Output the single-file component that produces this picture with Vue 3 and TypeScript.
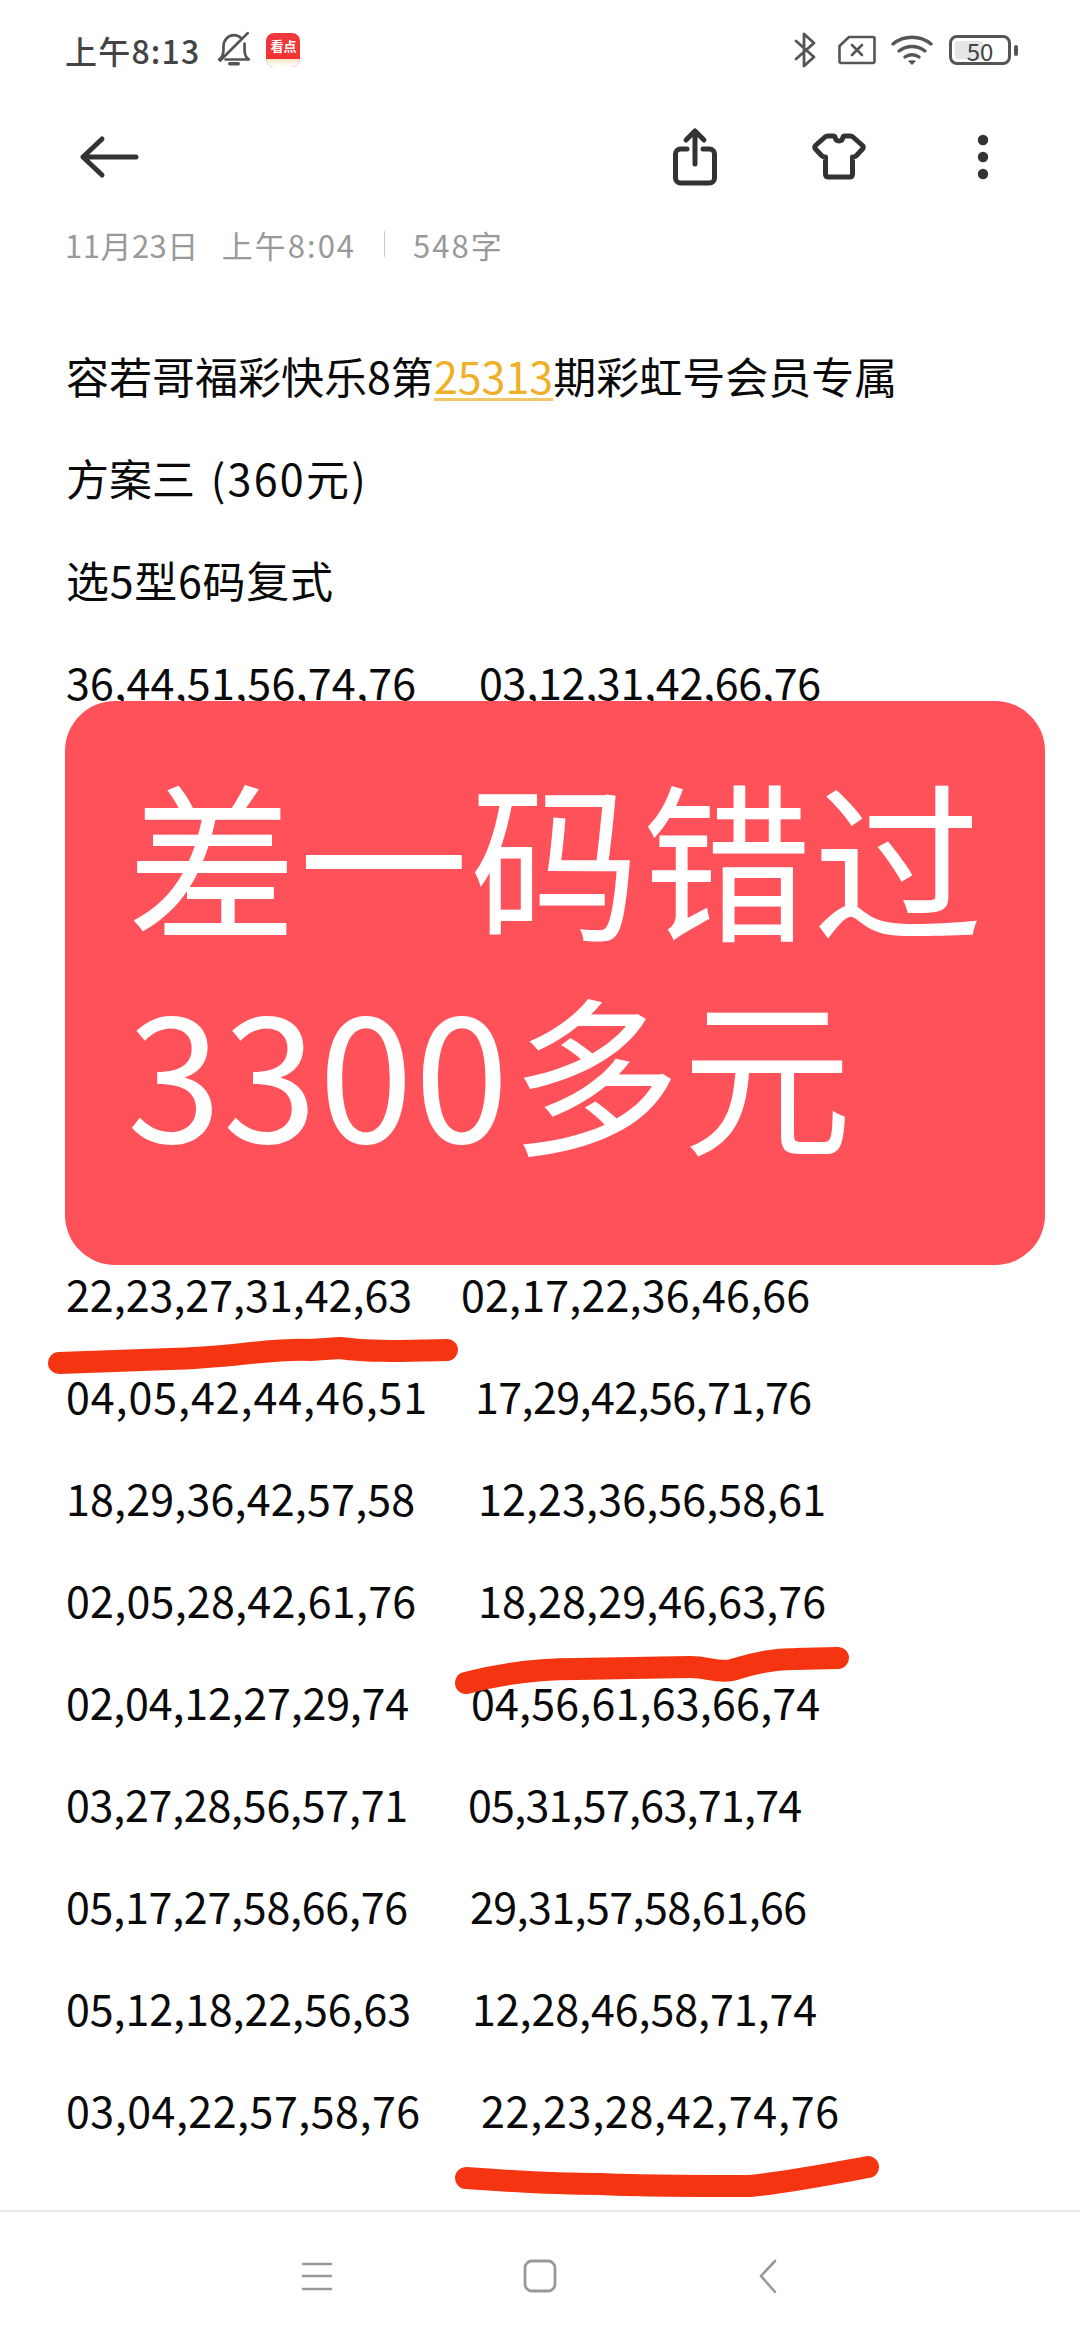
<script setup lang="ts">
interface NumberRow {
  left: string;
  leftW: number;
  right: string;
  rightW: number;
  rightX: number;
}

// 第二列的起始位置不整齐，原文是用空格隔开的
const topRow: NumberRow = { left: "36,44,51,56,74,76", leftW: 350, right: "03,12,31,42,66,76", rightW: 342, rightX: 479 };

const rows: NumberRow[] = [
  { left: "22,23,27,31,42,63", leftW: 346, right: "02,17,22,36,46,66", rightW: 349, rightX: 461 },
  { left: "04,05,42,44,46,51", leftW: 361, right: "17,29,42,56,71,76", rightW: 337, rightX: 475 },
  { left: "18,29,36,42,57,58", leftW: 349, right: "12,23,36,56,58,61", rightW: 348, rightX: 478 },
  { left: "02,05,28,42,61,76", leftW: 350, right: "18,28,29,46,63,76", rightW: 348, rightX: 478 },
  { left: "02,04,12,27,29,74", leftW: 343, right: "04,56,61,63,66,74", rightW: 349, rightX: 471 },
  { left: "03,27,28,56,57,71", leftW: 342, right: "05,31,57,63,71,74", rightW: 334, rightX: 468 },
  { left: "05,17,27,58,66,76", leftW: 342, right: "29,31,57,58,61,66", rightW: 337, rightX: 470 },
  { left: "05,12,18,22,56,63", leftW: 345, right: "12,28,46,58,71,74", rightW: 345, rightX: 472 },
  { left: "03,04,22,57,58,76", leftW: 354, right: "22,23,28,42,74,76", rightW: 358, rightX: 481 },
];

// 这里的数字宽度不一样，按每列的实际宽度调字距
const spacing = (width: number) => `${((width - 346) / 16).toFixed(2)}px`;
const leftStyle = (row: NumberRow) => ({ width: `${row.rightX - 66}px`, letterSpacing: spacing(row.leftW) });
const rightStyle = (row: NumberRow) => ({ letterSpacing: spacing(row.rightW) });
</script>

<template>
  <div class="page">
    <div class="status">
      <span class="time">上午8:13</span>
      <svg class="bell" width="36" height="38" viewBox="0 0 34 36" fill="none" stroke="#555" stroke-width="2.6" stroke-linecap="round" stroke-linejoin="round">
        <path d="M3 27c3-2 4-5 4-9v-3C7 9 11 4 17 4c3 0 5 1 7 3" />
        <path d="M27 12v6c0 4 1 7 4 9H9" />
        <path d="M13 31h8" stroke-width="3.4" />
        <path d="M30 2 4 28" />
      </svg>
      <div class="app-icon">
        <span class="app-name">看点</span>
        <span class="app-foot"></span>
      </div>
      <div class="status-right">
        <svg width="24" height="36" viewBox="0 0 24 36" fill="none" stroke="#555" stroke-width="2.8" stroke-linecap="round" stroke-linejoin="round">
          <path d="M3 9 21 25 11 34V2l10 9L3 27" />
        </svg>
        <svg class="sim" width="38" height="30" viewBox="0 0 38 30" fill="none" stroke="#555" stroke-width="2.6" stroke-linecap="round" stroke-linejoin="round">
          <path d="M1.5 11 11 2h24a1.5 1.5 0 0 1 1.5 1.5v23A1.5 1.5 0 0 1 35 28H3a1.5 1.5 0 0 1-1.5-1.5z" />
          <path d="M14 10l10 10M24 10 14 20" />
        </svg>
        <svg class="wifi" width="42" height="32" viewBox="0 0 42 32" fill="none" stroke="#555" stroke-width="3.4" stroke-linecap="round">
          <path d="M2 10c11-9 27-9 38 0" />
          <path d="M8 17c8-6 18-6 26 0" />
          <path d="M14 23c4-3 10-3 14 0" />
          <path d="M21 31l-4-4c2-1 6-1 8 0z" fill="#555" stroke="none" />
        </svg>
        <div class="battery">
          <span class="battery-fill"></span>
          <span class="battery-num">50</span>
        </div>
        <span class="battery-nub"></span>
      </div>
    </div>

    <div class="toolbar">
      <svg width="70" height="60" viewBox="0 0 70 60" fill="none" stroke="#333" stroke-width="5" stroke-linecap="round" stroke-linejoin="round">
        <path d="M60 30H7M26 12 7 30l19 18" />
      </svg>
      <svg class="share" width="60" height="60" viewBox="0 0 60 60" fill="none" stroke="#333" stroke-width="5" stroke-linecap="round" stroke-linejoin="round">
        <path d="M22 22h-6.500a5 5 0 0 0-5 5v24a5 5 0 0 0 5 5h29a5 5 0 0 0 5-5V27a5 5 0 0 0-5-5H38" />
        <path d="M30 37V5M21 13l9-9 9 9" />
      </svg>
      <svg width="60" height="60" viewBox="0 0 60 60" fill="none" stroke="#333" stroke-width="5" stroke-linecap="round" stroke-linejoin="round">
        <path d="M24 9c1 0 2 .5 2.200 2 1 4 6.600 4 7.600 0 .2-1.500 1.200-2 2.200-2h5c1 0 2 0 3 1l9.500 8.500c1 1 1 2.500 0 3.500l-6.500 7c-1 1-2 1-3.500 1v17c0 2-1 3-3 3H19.500c-2 0-3-1-3-3V30c-1.500 0-2.500 0-3.500-1l-6.500-7c-1-1-1-2.500 0-3.500L16 10c1-1 2-1 3-1z" />
      </svg>
      <svg width="60" height="60" viewBox="0 0 60 60" fill="#333">
        <circle cx="30" cy="13" r="5.200" />
        <circle cx="30" cy="30" r="5.200" />
        <circle cx="30" cy="47" r="5.200" />
      </svg>
    </div>

    <div class="meta">
      <span class="meta-date">11月23日</span>
      <span class="meta-time">上午8:04</span>
      <span class="meta-divider"></span>
      <span class="meta-count">548字</span>
    </div>

    <div class="note">
      <p class="line">容若哥福彩快乐8第<span class="issue">25313</span>期彩虹号会员专属</p>
      <p class="line plan">方案三 <span class="plan-price">(360元)</span></p>
      <p class="line kind">选5型6码复式</p>
      <p class="line">
        <span class="col" :style="leftStyle(topRow)">{{ topRow.left }}</span><span :style="rightStyle(topRow)">{{ topRow.right }}</span>
      </p>
      <div class="covered"></div>
      <p v-for="row in rows" :key="row.left" class="line">
        <span class="col" :style="leftStyle(row)">{{ row.left }}</span><span :style="rightStyle(row)">{{ row.right }}</span>
      </p>

      <div class="banner">
        <div>差一码错过</div>
        <div>3300多元</div>
      </div>
    </div>

    <div class="nav">
      <svg width="32" height="32" viewBox="0 0 32 32" fill="none" stroke="#999" stroke-width="2.600" stroke-linecap="round">
        <path d="M2 4h28M2 16h28M2 29h28" />
      </svg>
      <svg width="34" height="34" viewBox="0 0 34 34" fill="none" stroke="#999" stroke-width="2.800">
        <rect x="2" y="2" width="30" height="30" rx="7" />
      </svg>
      <svg width="20" height="34" viewBox="0 0 20 34" fill="none" stroke="#999" stroke-width="2.600" stroke-linecap="round" stroke-linejoin="round">
        <path d="M17 2 3 17l14 16" />
      </svg>
    </div>

    <svg class="marks" width="1080" height="2340" viewBox="0 0 1080 2340" fill="none" stroke="#F53511" stroke-width="22" stroke-linecap="round" stroke-linejoin="round">
      <path d="M59 1363 170 1359C230 1358 270 1348 310 1350L340 1348C370 1352 400 1351 447 1350" />
      <path d="M466 1683C500 1674 540 1669 576 1669L690 1667C710 1667 715 1673 732 1670 750 1664 770 1659 795 1659L838 1658" />
      <path d="M466 2178C520 2182 560 2184 600 2184 640 2186 700 2186 750 2186 790 2182 830 2174 868 2167" />
    </svg>
  </div>
</template>

<style scoped>
.page {
  position: relative;
  width: 1080px;
  height: 2340px;
  overflow: hidden;
  display: flex;
  flex-direction: column;
  background: #fff;
  font-family: "Noto Sans CJK SC", "Noto Sans", sans-serif;
}

.status {
  display: flex;
  align-items: center;
  flex: 0 0 100px;
  padding: 0 62px 0 65px;
}

.time {
  font-size: 32px;
  font-weight: 500;
  color: #444;
  letter-spacing: 1.2px;
}

.bell {
  margin-left: 16px;
}

.app-icon {
  margin-left: 14px;
  width: 34px;
  height: 34px;
  border-radius: 8px;
  overflow: hidden;
  display: flex;
  flex-direction: column;
  align-items: center;
  background: linear-gradient(#f0383c, #f4312f);
}

.app-name {
  flex: 1;
  font-size: 13px;
  line-height: 26px;
  font-weight: 700;
  color: #fff;
}

.app-foot {
  flex: 0 0 8px;
  width: 100%;
  background: linear-gradient(#fbe6c8, #fff);
}

.status-right {
  margin-left: auto;
  display: flex;
  align-items: center;
}

.sim {
  margin-left: 21px;
}

.wifi {
  margin-left: 15px;
}

.battery {
  position: relative;
  margin-left: 16px;
  width: 62px;
  height: 30px;
  box-sizing: border-box;
  border: 3.5px solid #555;
  border-radius: 8px;
  display: flex;
  align-items: center;
  justify-content: center;
}

.battery-fill {
  position: absolute;
  left: 3px;
  top: 3px;
  bottom: 3px;
  width: 28px;
  background: #e6e6e6;
  border-radius: 2px;
}

.battery-num {
  position: relative;
  font-size: 24px;
  line-height: 23px;
  color: #444;
}

.battery-nub {
  margin-left: 3px;
  width: 4px;
  height: 11px;
  border-radius: 2px;
  background: #555;
}

.toolbar {
  display: flex;
  align-items: center;
  gap: 84px;
  flex: 0 0 114px;
  padding: 0 67px 0 76px;
}

.share {
  margin-left: auto;
}

.meta {
  display: flex;
  align-items: center;
  height: 40px;
  margin-top: 10px;
  padding-left: 65px;
  font-size: 31px;
  color: #999;
}

.meta-date {
  letter-spacing: 0.5px;
}

.meta-time {
  margin-left: 23px;
  letter-spacing: 2px;
}

.meta-divider {
  width: 1px;
  height: 26px;
  margin: 0 28px;
  background: #ccc;
}

.meta-count {
  letter-spacing: 2px;
}

.note {
  position: relative;
  margin-top: 60px;
  padding-left: 66px;
  font-size: 43px;
  color: #0a0a0a;
}

.line {
  margin: 0;
  height: 102px;
  line-height: 102px;
  white-space: pre;
}

.issue {
  color: #eeb026;
  text-decoration: underline;
  text-decoration-color: #f0c868;
  text-decoration-thickness: 3px;
  text-underline-offset: 4px;
}

.plan {
  word-spacing: 6px;
}

.plan-price {
  letter-spacing: 2.3px;
}

.kind {
  letter-spacing: 0.7px;
}

.col {
  display: inline-block;
}

.covered {
  height: 510px;
}

.banner {
  position: absolute;
  left: 65px;
  top: 377px;
  width: 980px;
  height: 564px;
  box-sizing: border-box;
  padding: 47px 0 0 62px;
  border-radius: 50px;
  background: #ff5159;
  color: #fff;
  font-size: 170px;
  line-height: 214px;
  letter-spacing: 1.5px;
}

.nav {
  margin-top: auto;
  flex: 0 0 130px;
  box-sizing: border-box;
  border-top: 2px solid #e8e8e8;
  display: flex;
  align-items: center;
  padding-left: 301px;
}

.nav svg:nth-child(2) {
  margin-left: 190px;
}

.nav svg:nth-child(3) {
  margin-left: 201px;
}

.marks {
  position: absolute;
  left: 0;
  top: 0;
  pointer-events: none;
}
</style>

<style>
html,
body {
  margin: 0;
  background: #fff;
}
</style>
